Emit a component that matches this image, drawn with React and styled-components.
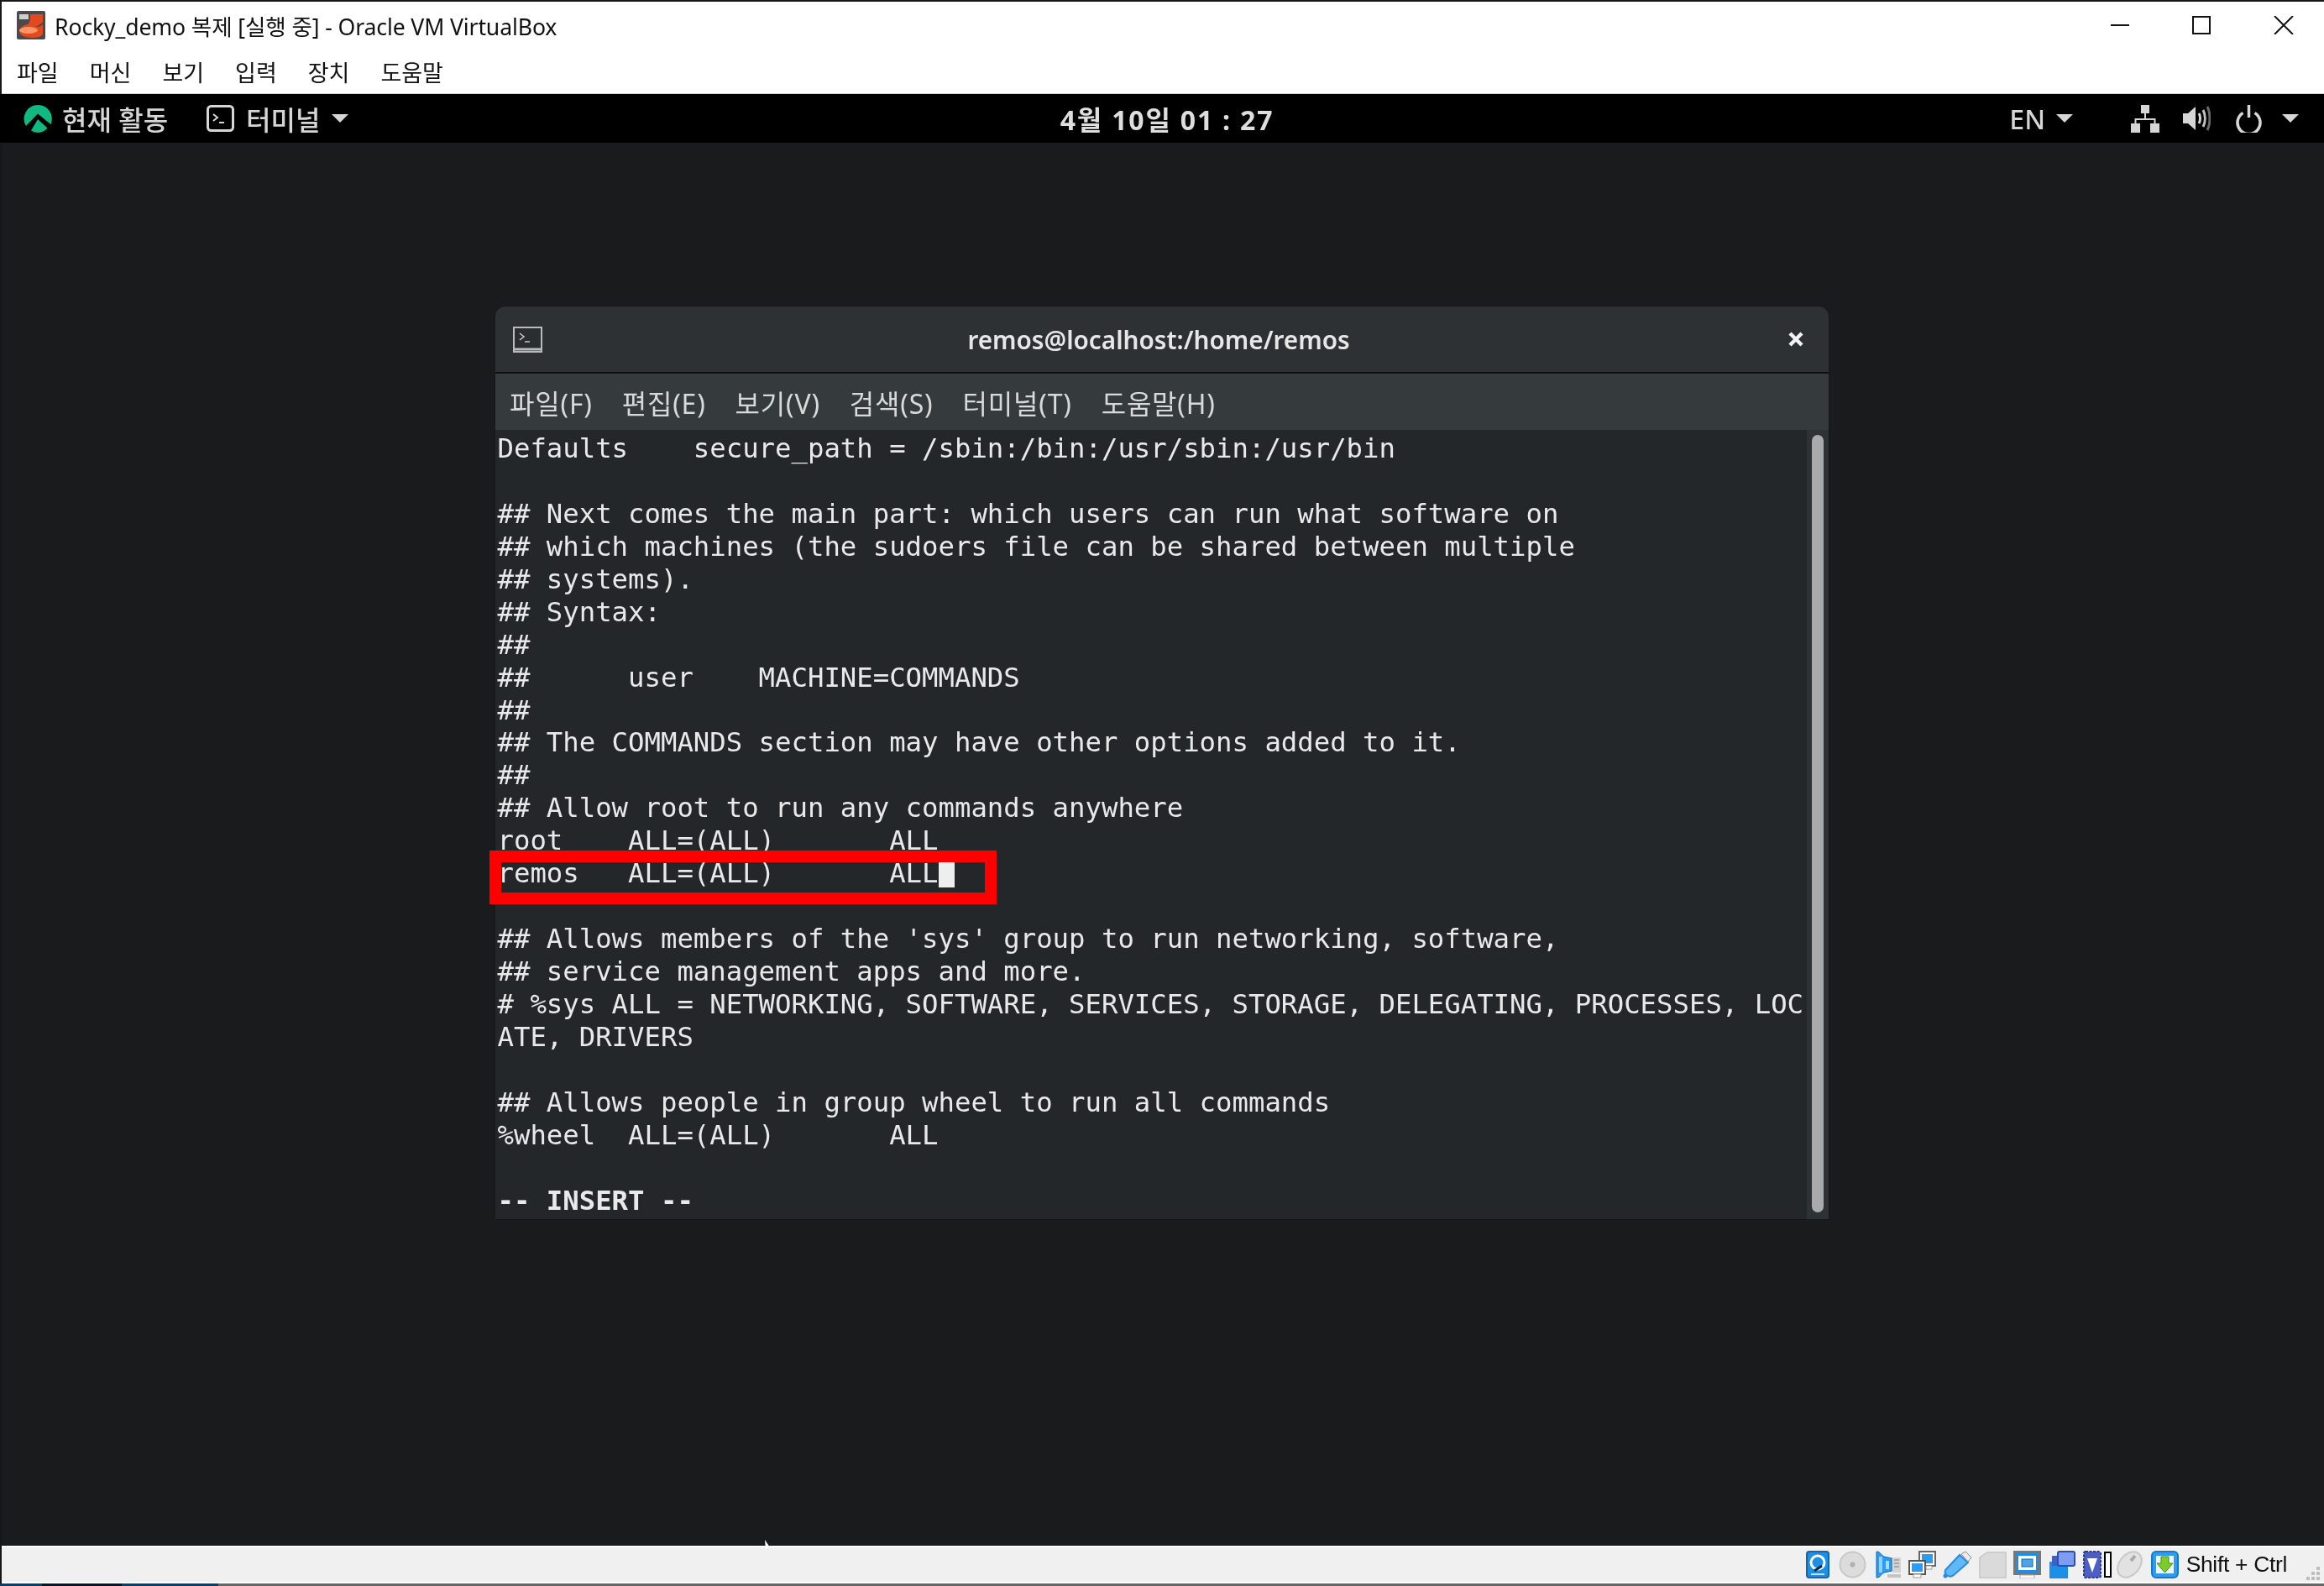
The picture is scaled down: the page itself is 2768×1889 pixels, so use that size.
import React from 'react'
import styled, { createGlobalStyle } from 'styled-components'

const GlobalStyle = createGlobalStyle`
  html, body { margin: 0; padding: 0; background: #1a1b1d; overflow: hidden; }
  #root { width: 2768px; height: 1889px; }
`

const Screen = styled.div`
  width: 2768px;
  height: 1889px;
  display: flex;
  flex-direction: column;
  background: #15171a;
  padding-top: 2px;
  box-sizing: border-box;
  filter: blur(0.55px);
  font-family: "Noto Sans", "Noto Sans CJK KR", sans-serif;
`
const HostTitle = styled.div`
  height: 56px;
  margin-left: 2px;
  background: #fff;
  display: flex;
  align-items: center;
  padding: 0 36px 0 18px;
  color: #111;
  font-size: 26.6px;
`
const HostTitleText = styled.span`
  margin: 1px 0 0 11px;
  flex: 1;
  white-space: pre;
  letter-spacing: -0.12px;
`
const WinButtons = styled.div`
  display: flex;
  align-items: center;
  gap: 75px;
`
const HostMenu = styled.div`
  height: 54px;
  margin-left: 2px;
  background: #fff;
  border-bottom: 1px solid #d0d0d0;
  box-sizing: border-box;
  display: flex;
  align-items: center;
  gap: 37px;
  padding: 2px 0 0 18px;
  color: #111;
  font-size: 27px;
`
const GnomeBar = styled.div`
  height: 58px;
  background: #000;
  color: #d6d6d6;
  display: grid;
  grid-template-columns: 1fr auto 1fr;
  align-items: center;
  padding: 0 30px 0 28px;
  font-size: 32px;
  font-weight: 500;
`
const GnomeSide = styled.div`
  display: flex;
  align-items: center;
  justify-content: ${p => (p.$end ? 'flex-end' : 'flex-start')};
`
const Clock = styled.div`
  margin-left: 14px;
  color: #dedede;
  font-weight: 700;
  font-size: 32px;
  letter-spacing: 1.8px;
  white-space: pre;
`
const Label = styled.span`
  margin-left: ${p => p.$ml || 0}px;
  white-space: pre;
`
const IconSlot = styled.span`
  display: flex;
  margin-left: ${p => p.$ml || 0}px;
`
const Caret = styled.span`
  display: block;
  margin-left: ${p => p.$ml || 0}px;
  width: 0;
  height: 0;
  border-left: 10px solid transparent;
  border-right: 10px solid transparent;
  border-top: 10px solid #d6d6d6;
`
const Desktop = styled.div`
  flex: 1;
  background: #1a1b1d;
  padding: 195px 0 0 590px;
  position: relative;
  margin-left: 2px;
`
const Terminal = styled.div`
  width: 1588px;
  height: 1087px;
  margin-left: -2px;
  border-radius: 12px 12px 0 0;
  display: flex;
  flex-direction: column;
  background: #23272a;
  box-shadow: 0 0 0 1px #15171a;
`
const TermTitle = styled.div`
  height: 78px;
  flex: none;
  background: #2d3134;
  border-bottom: 2px solid #0f1112;
  border-radius: 12px 12px 0 0;
  display: grid;
  grid-template-columns: 1fr auto 1fr;
  align-items: center;
  padding: 0 29px 0 21px;
  color: #e6e7e7;
  font-size: 29.7px;
  font-weight: 600;
`
const TitleLeft = styled.div`
  display: flex;
`
const TitleRight = styled.div`
  display: flex;
  justify-content: flex-end;
`
const TermMenu = styled.div`
  height: 67px;
  flex: none;
  background: #353a3d;
  display: flex;
  align-items: center;
  gap: 35px;
  padding: 0 0 0 17px;
  color: #d8dad9;
  font-size: 32px;
  letter-spacing: 0.8px;
`
const TermBody = styled.div`
  flex: 1;
  display: flex;
  position: relative;
  min-height: 0;
`
const Console = styled.div`
  flex: 1;
  padding: 3px 0 0 2.5px;
  font-family: "DejaVu Sans Mono", monospace;
  font-size: 32.3px;
  line-height: 38.95px;
  color: #e8e9e8;
`
const Line = styled.div`
  height: 38.95px;
  white-space: pre;
  font-weight: ${p => (p.$bold ? 700 : 400)};
`
const Cursor = styled.span`
  display: inline-block;
  width: 19px;
  height: 32px;
  background: #eeeeee;
  vertical-align: -6px;
`
const Highlight = styled.div`
  position: absolute;
  left: -7px;
  top: 501px;
  width: 576px;
  height: 36px;
  border: 14px solid #ff0000;
`
const ScrollTrack = styled.div`
  width: 26px;
  flex: none;
  background: #2d3235;
  padding: 6px;
  box-sizing: border-box;
  padding-bottom: 8px;
`
const ScrollThumb = styled.div`
  width: 14px;
  height: 100%;
  border-radius: 7px;
  background: #a9abaa;
`
const MouseTip = styled.svg`
  position: absolute;
  left: 908px;
  bottom: -5px;
`
const StatusBar = styled.div`
  height: 45px;
  margin-left: 2px;
  background: #f0f0f0;
  border-top: 2px solid #fff;
  border-bottom: 2px solid #fff;
  box-sizing: border-box;
  display: flex;
  align-items: center;
  justify-content: flex-end;
  padding: 0 3px 0 0;
  gap: 8px;
  color: #111;
  > svg:nth-child(1), > svg:nth-child(2) { margin-right: 3px; }
`
const TrayText = styled.span`
  margin: 0 0 0 1px;
  font-size: 26.4px;
  white-space: pre;
  font-family: "Liberation Sans", sans-serif;
  letter-spacing: -0.3px;
`
const Grip = styled.svg`
  margin-left: 13px;
  align-self: flex-end;
`
const BottomEdge = styled.div`
  height: 3px;
  background: linear-gradient(90deg, #0e3d5f 0, #0e3d5f 50px, #0a1626 50px, #0a1626 145px, #0e3d5f 145px, #0e3d5f 260px, #666 260px);
`

const VBoxLogo = () => (
  <svg width="34" height="34" viewBox="0 0 34 34">
    <rect width="34" height="34" rx="2" fill="#4a4a4a" />
    <rect x="3" y="4" width="11" height="6" fill="#cfcfcf" />
    <path d="M16 4h15v9c-2 3-6 4-9 6 4 0 9-1 9-4v12c0 2-4 5-12 5-9 0-16-3-16-8 0-4 5-7 10-8 3-1 3-8 3-12z" fill="#e2491f" />
    <ellipse cx="14" cy="23" rx="11" ry="4" fill="#ff9467" />
  </svg>
)

const WinMin = () => (
  <svg width="22" height="22" viewBox="0 0 22 22"><path d="M0 11h22" stroke="#111" strokeWidth="2" /></svg>
)
const WinMax = () => (
  <svg width="22" height="22" viewBox="0 0 22 22"><rect x="1" y="1" width="20" height="20" fill="none" stroke="#111" strokeWidth="2" /></svg>
)
const WinClose = () => (
  <svg width="24" height="22" viewBox="0 0 24 22"><path d="M1 0l22 22M23 0L1 22" stroke="#111" strokeWidth="2" /></svg>
)

const RockyLogo = () => (
  <svg width="34" height="33" viewBox="0 0 34 33">
    <path d="M17 0a16.500 16.500 0 0 1 15.500 23L17 10.500 3 25A16.500 16.500 0 0 1 17 0z" fill="#10b981" />
    <path d="M17 17l11.500 10.500A16.500 16.500 0 0 1 17 33a16 16 0 0 1-8-2.500z" fill="#10b981" />
  </svg>
)

const TerminalGlyph = () => (
  <svg width="33" height="32" viewBox="0 0 33 32">
    <rect x="1.500" y="1.500" width="30" height="29" rx="4" fill="none" stroke="#d6d6d6" strokeWidth="3" />
    <path d="M8 11l5 4-5 4M15 21h6" fill="none" stroke="#d6d6d6" strokeWidth="2" />
  </svg>
)

const NetworkIcon = () => (
  <svg width="34" height="33" viewBox="0 0 34 33">
    <g fill="#d6d6d6">
      <rect x="12" y="0" width="10" height="10" />
      <rect x="0" y="22" width="11" height="11" />
      <rect x="23" y="22" width="11" height="11" />
    </g>
    <path d="M17 10v7M5.500 22v-5h23v5" fill="none" stroke="#d6d6d6" strokeWidth="2" />
  </svg>
)
const SpeakerIcon = () => (
  <svg width="33" height="32" viewBox="0 0 33 32">
    <path d="M0 10h6l9-8v28l-9-8H0z" fill="#d6d6d6" />
    <path d="M19 10c2 3 2 9 0 12" fill="none" stroke="#d6d6d6" strokeWidth="3" />
    <path d="M24 6c3 6 3 14 0 20" fill="none" stroke="#c0c0c0" strokeWidth="3" />
    <path d="M29 2c4 8 4 20 0 28" fill="none" stroke="#6a6a6a" strokeWidth="3" />
  </svg>
)
const PowerIcon = () => (
  <svg width="31" height="33" viewBox="0 0 31 33">
    <path d="M8.500 9.500a13.500 13.500 0 1 0 14 0" fill="none" stroke="#d6d6d6" strokeWidth="3.500" />
    <path d="M15.500 0v15" stroke="#d6d6d6" strokeWidth="3.500" />
  </svg>
)

const TermIcon = () => (
  <svg width="35" height="31" viewBox="0 0 35 31">
    <rect x="1" y="1" width="33" height="29" fill="#2a2e30" stroke="#b9bcbb" strokeWidth="2" />
    <path d="M1 27h33" stroke="#b9bcbb" strokeWidth="3" />
    <path d="M8 8l5 4-5 4M14 18h6" fill="none" stroke="#c6c8c7" strokeWidth="1.600" />
  </svg>
)
const TermClose = () => (
  <svg width="20" height="20" viewBox="0 0 20 20"><path d="M3 3l14 14M17 3L3 17" stroke="#f2f2f2" strokeWidth="4.500" /></svg>
)

/* VirtualBox status tray, drawn small */
const TrayHdd = () => (
  <svg width="28" height="33" viewBox="0 0 28 33">
    <rect x="1" y="1" width="26" height="31" rx="3" fill="#1c8fe6" stroke="#1565ad" strokeWidth="2" />
    <circle cx="14" cy="14" r="8" fill="none" stroke="#fff" strokeWidth="3" />
    <path d="M10 24l9-6" stroke="#123" strokeWidth="3" />
    <path d="M6 28h16" stroke="#bfe3ff" strokeWidth="2" />
  </svg>
)
const TrayDisc = () => (
  <svg width="33" height="33" viewBox="0 0 33 33">
    <circle cx="16.500" cy="16.500" r="15" fill="#dcdcdc" stroke="#c8c8c8" strokeWidth="2" />
    <circle cx="16.500" cy="16.500" r="3" fill="#b0b0b0" />
  </svg>
)
const TrayAudio = () => (
  <svg width="31" height="33" viewBox="0 0 31 33">
    <rect x="19" y="8" width="11" height="18" fill="#d4d4d4" />
    <path d="M22 11h6M22 15h6M22 19h6" stroke="#999" strokeWidth="1.500" />
    <path d="M14 28h16v4H14z" fill="#c4c4c4" />
    <path d="M1 1c5 0 6 5 9 6l9 2v15l-9 2c-3 1-4 6-9 6z" fill="#2b9df0" stroke="#1565ad" />
    <rect x="4" y="7" width="4" height="19" fill="#8fd2ff" />
    <rect x="12" y="12" width="4" height="10" fill="#a6dcff" />
  </svg>
)
const TrayNet = () => (
  <svg width="33" height="33" viewBox="0 0 33 33">
    <rect x="13" y="1" width="19" height="17" fill="#fff" stroke="#666" strokeWidth="2" />
    <rect x="16" y="4" width="13" height="11" fill="#2b9df0" />
    <rect x="1" y="12" width="19" height="16" fill="#fff" stroke="#555" strokeWidth="2" />
    <rect x="4" y="15" width="13" height="10" fill="#2b9df0" />
    <path d="M6 28h9v4H6z" fill="#fff" stroke="#999" />
    <path d="M21 18h7v4h-7z" fill="#fff" stroke="#999" />
  </svg>
)
const TrayUsb = () => (
  <svg width="35" height="33" viewBox="0 0 35 33">
    <path d="M3 23L20 5l10 9-17 15c-5 4-12 0-10-6z" fill="#5fb8f7" stroke="#2a8ae0" strokeWidth="2" />
    <path d="M22 4l5-3 7 7-4 5z" fill="#ececec" stroke="#888" />
    <circle cx="3" cy="30" r="2.500" fill="#2a8ae0" />
  </svg>
)
const TrayFolder = () => (
  <svg width="33" height="33" viewBox="0 0 33 33">
    <path d="M1 8l9-6h22v30H1z" fill="#dadada" stroke="#cdcdcd" strokeWidth="2" />
  </svg>
)
const TrayScreen = () => (
  <svg width="33" height="33" viewBox="0 0 33 33">
    <rect x="1.500" y="1.500" width="30" height="26" fill="#1c8fe6" stroke="#777" strokeWidth="3" />
    <rect x="6" y="6" width="21" height="17" fill="#fff" />
    <rect x="10" y="10" width="13" height="9" fill="#4aa5e8" stroke="#1565ad" />
    <path d="M8 29h17v4H8z" fill="#fff" stroke="#aaa" />
  </svg>
)
const TrayCapture = () => (
  <svg width="33" height="33" viewBox="0 0 33 33">
    <rect x="2" y="13" width="22" height="20" fill="#1c8fe6" />
    <rect x="12" y="1" width="20" height="17" rx="2" fill="#7e9cf0" stroke="#2b4fb0" strokeWidth="2" />
    <path d="M5 6h6v12H5z" fill="#3c62c8" />
  </svg>
)
const TrayCpu = () => (
  <svg width="24" height="33" viewBox="0 0 24 33">
    <rect x="2" y="1" width="20" height="31" rx="2" fill="#4d5fc4" stroke="#2c3a8c" strokeWidth="2" strokeDasharray="3 1.500" />
    <path d="M6 9h12l-6 17z" fill="#fff" />
  </svg>
)
const TrayBar = styled.span`
  width: 9px;
  height: 31px;
  background: #fff;
  border: 2px solid #000;
  box-sizing: border-box;
  margin: 0 -4px 0 -6px;
`
const TrayMouse = () => (
  <svg width="35" height="33" viewBox="0 0 35 33">
    <ellipse cx="17.500" cy="16.500" rx="12" ry="17" transform="rotate(40 17.500 16.500)" fill="#e2e2e2" stroke="#c8c8c8" strokeWidth="2" />
    <path d="M19 12l5-6" stroke="#aaa" strokeWidth="4" />
  </svg>
)
const TrayArrow = () => (
  <svg width="33" height="33" viewBox="0 0 33 33">
    <rect x="1" y="1" width="31" height="31" rx="5" fill="#2f9cf0" stroke="#1a78c8" strokeWidth="2" />
    <rect x="6" y="6" width="21" height="21" fill="#eaf5ff" />
    <path d="M12 7h9v8h5L16.500 26 7 15h5z" fill="#7ecb2a" stroke="#4a8c12" />
  </svg>
)

const lines = [
  'Defaults    secure_path = /sbin:/bin:/usr/sbin:/usr/bin',
  '',
  '## Next comes the main part: which users can run what software on',
  '## which machines (the sudoers file can be shared between multiple',
  '## systems).',
  '## Syntax:',
  '##',
  '##      user    MACHINE=COMMANDS',
  '##',
  '## The COMMANDS section may have other options added to it.',
  '##',
  '## Allow root to run any commands anywhere',
  'root    ALL=(ALL)       ALL',
  'remos   ALL=(ALL)       ALL',
  '',
  "## Allows members of the 'sys' group to run networking, software,",
  '## service management apps and more.',
  '# %sys ALL = NETWORKING, SOFTWARE, SERVICES, STORAGE, DELEGATING, PROCESSES, LOC',
  'ATE, DRIVERS',
  '',
  '## Allows people in group wheel to run all commands',
  '%wheel  ALL=(ALL)       ALL',
  '',
  '-- INSERT --'
]

const hostMenu = ['파일', '머신', '보기', '입력', '장치', '도움말']
const termMenu = ['파일(F)', '편집(E)', '보기(V)', '검색(S)', '터미널(T)', '도움말(H)']

export default function App () {
  return (
    <Screen>
      <GlobalStyle />
      <HostTitle>
        <VBoxLogo />
        <HostTitleText>Rocky_demo 복제 [실행 중] - Oracle VM VirtualBox</HostTitleText>
        <WinButtons>
          <WinMin />
          <WinMax />
          <WinClose />
        </WinButtons>
      </HostTitle>
      <HostMenu>
        {hostMenu.map(m => <span key={m}>{m}</span>)}
      </HostMenu>
      <GnomeBar>
        <GnomeSide>
          <RockyLogo />
          <Label $ml={12}>현재 활동</Label>
          <IconSlot $ml={46}><TerminalGlyph /></IconSlot>
          <Label $ml={14}>터미널</Label>
          <Caret $ml={14} />
        </GnomeSide>
        <Clock>4월 10일 01 : 27</Clock>
        <GnomeSide $end>
          <Label>EN</Label>
          <Caret $ml={13} />
          <IconSlot $ml={69}><NetworkIcon /></IconSlot>
          <IconSlot $ml={28}><SpeakerIcon /></IconSlot>
          <IconSlot $ml={30}><PowerIcon /></IconSlot>
          <Caret $ml={24} />
        </GnomeSide>
      </GnomeBar>
      <Desktop>
        <Terminal>
          <TermTitle>
            <TitleLeft><TermIcon /></TitleLeft>
            <span>remos@localhost:/home/remos</span>
            <TitleRight><TermClose /></TitleRight>
          </TermTitle>
          <TermMenu>
            {termMenu.map(m => <span key={m}>{m}</span>)}
          </TermMenu>
          <TermBody>
            <Console>
              {lines.map((l, i) => (
                <Line key={i} $bold={l.startsWith('-- INSERT')}>
                  {l}
                  {i === 13 && <Cursor />}
                </Line>
              ))}
            </Console>
            <ScrollTrack><ScrollThumb /></ScrollTrack>
            <Highlight />
          </TermBody>
        </Terminal>
        <MouseTip width="10" height="12" viewBox="0 0 10 12"><path d="M1 0l6 9-4-1-1 4z" fill="#fff" /></MouseTip>
      </Desktop>
      <StatusBar>
        <TrayHdd />
        <TrayDisc />
        <TrayAudio />
        <TrayNet />
        <TrayUsb />
        <TrayFolder />
        <TrayScreen />
        <TrayCapture />
        <TrayCpu />
        <TrayBar />
        <TrayMouse />
        <TrayArrow />
        <TrayText>Shift + Ctrl</TrayText>
        <Grip width="20" height="20" viewBox="0 0 20 20">
          <g fill="#bdbdbd">
            <rect x="14" y="2" width="4" height="4" />
            <rect x="8" y="8" width="4" height="4" />
            <rect x="14" y="8" width="4" height="4" />
            <rect x="2" y="14" width="4" height="4" />
            <rect x="8" y="14" width="4" height="4" />
            <rect x="14" y="14" width="4" height="4" />
          </g>
        </Grip>
      </StatusBar>
      <BottomEdge />
    </Screen>
  )
}
